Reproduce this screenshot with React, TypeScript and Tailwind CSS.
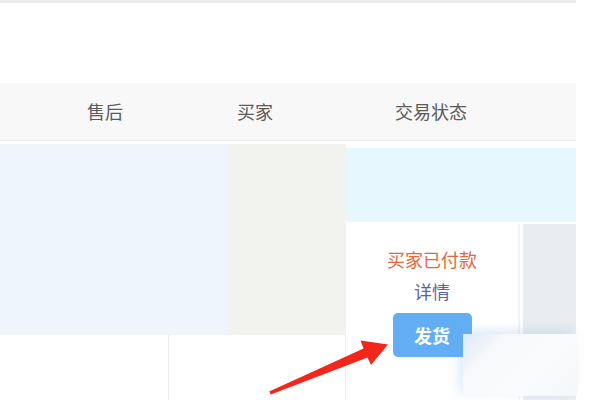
import React from "react";

export default function App() {
  const font = { fontFamily: '"Noto Sans CJK SC", "Noto Sans", sans-serif' };
  return (
    <div className="relative w-[600px] h-[400px] overflow-hidden bg-white" style={font}>
      <div className="w-[576px] flex flex-col">
        <div className="h-[3px] bg-[#ebebeb]" />
        <div className="h-[80px] bg-white" />
        <div className="h-[58px] flex items-center bg-[#f8f8f8] border-b border-[#ececec] text-[18px] text-[#5a5a5a]">
          <div className="w-[210px] text-center">售后</div>
          <div className="w-[90px] text-center">买家</div>
          <div className="w-[262px] text-center">交易状态</div>
        </div>
        <div className="h-[3px] bg-white" />
        <div className="flex">
          <div className="w-[346px] flex flex-col">
            <div className="flex h-[191px]">
              <div className="w-[228px] bg-[#eef6fb]" />
              <div className="w-[118px] bg-[#f2f2ef]" />
            </div>
            <div className="flex h-[70px]">
              <div className="w-[169px] border-r border-[#ececec]" />
              <div className="flex-1 border-r border-[#ececec]" />
            </div>
          </div>
          <div className="w-[230px] flex flex-col">
            <div className="h-[4px] bg-white" />
            <div className="h-[74px] bg-[#e6f7fe]" />
            <div className="h-[2px] bg-white" />
            <div className="flex flex-1">
              <div className="w-[174px] flex flex-col items-center pt-[24px] border-r-2 border-[#f1f3f5]">
                <div className="text-[18px] leading-[22px] text-[#e2673f]">买家已付款</div>
                <div className="mt-[10px] text-[18px] leading-[22px] text-[#58679f]">详情</div>
                <div className="mt-[11px] w-[79px] h-[44px] rounded-[5px] bg-[#62aef5] text-white text-[18px] font-bold flex items-center justify-center">
                  发货
                </div>
              </div>
              <div className="w-[3px] bg-white" />
              <div className="flex-1 bg-[#e9edf1]" />
            </div>
          </div>
        </div>
      </div>

      <div
        className="absolute left-[463px] top-[334px] w-[114px] h-[62px] bg-[#fbfbfc]"
        style={{
          boxShadow: "-4px -4px 10px rgba(120,170,230,0.25)",
          backgroundImage:
            "linear-gradient(135deg, #dce9f8 0%, #f6f8fb 25%, #fafbfc 60%, #f4f6f8 100%)",
        }}
      />

      <svg className="absolute left-0 top-0" width="600" height="400" viewBox="0 0 600 400">
        <polygon
          points="269.2,391.4 363.6,348.5 360.5,340.5 388,344.5 371,365 367.5,357.5 270.8,394.6"
          fill="#f2261a"
        />
      </svg>
    </div>
  );
}
